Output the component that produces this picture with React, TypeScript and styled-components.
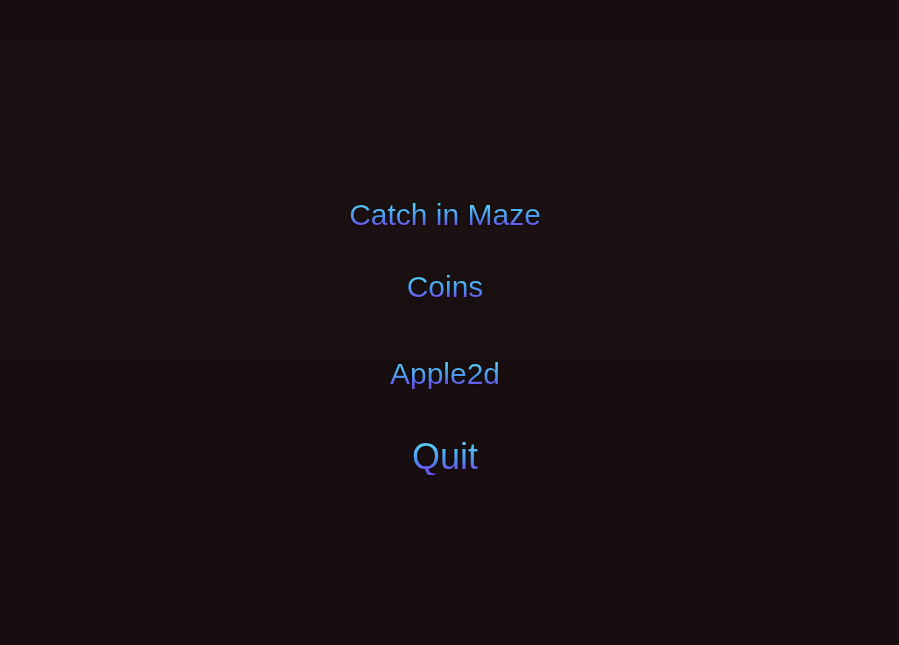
import React from "react";
import styled, { createGlobalStyle } from "styled-components";

const Global = createGlobalStyle`
  html, body { margin: 0; padding: 0; height: 100%; background: #180e0f; }
  #root { height: 100%; }
`;

const Screen = styled.div`
  width: 100%;
  height: 645px;
  background:
    linear-gradient(180deg, rgba(255,255,255,0.0) 0%, rgba(255,255,255,0.012) 35%, rgba(255,255,255,0.0) 60%),
    #180e0f;
  display: flex;
  flex-direction: column;
  align-items: center;
  padding: 200px 9px 0 0;
  box-sizing: border-box;
  overflow: hidden;
`;

const Item = styled.button<{ $size: number; $gap: number }>`
  appearance: none;
  border: none;
  background: linear-gradient(180deg, #5fd2f6 0%, #56c0f4 25%, #4d92ec 58%, #6a58ec 85%, #7050ea 100%);
  -webkit-background-clip: text;
  background-clip: text;
  color: transparent;
  font-family: "Liberation Sans", Arial, sans-serif;
  font-size: ${(p) => p.$size}px;
  line-height: 1;
  padding: 0;
  margin: ${(p) => p.$gap}px 0 0 0;
  cursor: pointer;
  filter: drop-shadow(0 0 1px rgba(0, 0, 0, 0.9));
`;

const items = [
  { label: "Catch in Maze", size: 30, gap: 0 },
  { label: "Coins", size: 30, gap: 42 },
  { label: "Apple2d", size: 30, gap: 57 },
  { label: "Quit", size: 36, gap: 50 },
];

export default function App() {
  return (
    <>
      <Global />
      <Screen>
        {items.map((it) => (
          <Item key={it.label} $size={it.size} $gap={it.gap}>
            {it.label}
          </Item>
        ))}
      </Screen>
    </>
  );
}
